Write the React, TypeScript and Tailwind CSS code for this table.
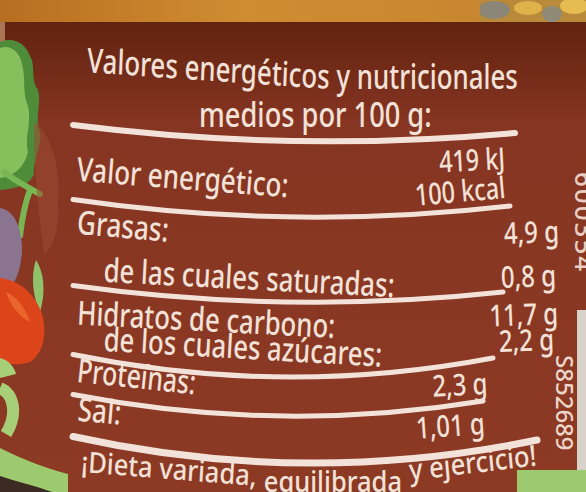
import React from "react";

const RULE = "#f3e2da";

type RuleProps = { to: number; left: number; mid: number; right: number; thick: number };

// curved separator, drawn overflowing its own box the way the jar bends it
function Rule({ to, left, mid, right, thick }: RuleProps) {
  const from = 5;
  const ctrl = 2 * mid - (left + right) / 2;
  return (
    <svg width={449} height={thick} className="block shrink-0 overflow-visible">
      <path
        d={`M${from},${left} Q${(from + to) / 2},${ctrl} ${to},${right}`}
        stroke={RULE}
        strokeWidth={thick}
        strokeLinecap="round"
        fill="none"
      />
    </svg>
  );
}

function LeftStrip() {
  return (
    <svg width={68} height={470} viewBox="0 0 68 470" className="block shrink-0">
      <rect x={0} y={0} width={5} height={50} fill="#c89a74" opacity={0.7} />
      <path d="M0,20 C14,14 26,22 30,34 C36,44 30,56 38,68 C42,82 34,96 40,110 C42,126 32,140 34,152 C30,162 20,166 0,168 Z" fill="#4f8c3a" />
      <path d="M0,26 C10,22 20,30 22,42 C26,56 22,70 28,84 C32,100 24,116 28,130 C24,146 14,154 0,156 Z" fill="#86c05c" />
      <path d="M4,150 C16,160 30,166 40,172 M30,168 C24,184 22,196 20,214" stroke="#78b553" strokeWidth={6} fill="none" strokeLinecap="round" />
      <path d="M34,100 C48,110 62,140 58,180 C60,210 52,226 44,232 C40,200 34,160 34,100 Z" fill="#9a4a33" opacity={0.55} />
      <path d="M0,186 C12,188 20,200 22,224 C22,246 16,260 8,268 L0,270 Z" fill="#8b7490" />
      <path d="M36,238 C44,250 46,270 40,290 C34,278 30,256 36,238 Z" fill="#8fc26b" />
      <path d="M0,256 C18,258 34,270 42,292 C48,314 42,332 30,340 C18,344 8,342 0,340 Z" fill="#dc4519" />
      <path d="M6,270 C16,274 26,286 30,300 C22,296 12,288 6,270 Z" fill="#ee6b32" opacity={0.8} />
      <path d="M0,336 C8,338 14,344 16,352 L0,356 Z" fill="#a6cf78" />
      <path d="M0,366 C14,372 18,392 6,412" stroke="#a6cf78" strokeWidth={12} fill="none" />
      <path d="M0,426 C20,436 44,446 68,452 L68,470 L0,470 Z" fill="#9dca6e" />
      <path d="M0,454 C18,460 36,464 52,470 L0,470 Z" fill="#3b2b22" />
    </svg>
  );
}

export default function App() {
  return (
    <div className="w-[586px] h-[492px] overflow-hidden flex flex-col bg-linear-to-b from-[#62230f] from-5% via-[#863522] via-25% to-[#8c3a24] font-['Noto_Sans','Open_Sans',sans-serif] font-medium text-[#f4e1d7]">
      {/* orange rim of the jar lid */}
      <div className="h-[22px] shrink-0 flex">
        <div className="flex-1 bg-linear-to-r from-[#b86e22] via-[#cf8c30] to-[#c88630]" />
        <svg width={106} height={22} className="block">
          <rect width={106} height={22} fill="#b88a3a" />
          <ellipse cx={14} cy={10} rx={16} ry={9} fill="#8c8676" />
          <ellipse cx={48} cy={8} rx={14} ry={7} fill="#e0b24a" />
          <ellipse cx={72} cy={14} rx={10} ry={8} fill="#8f8a78" />
          <ellipse cx={94} cy={6} rx={14} ry={8} fill="#e6bb52" />
        </svg>
      </div>

      <div className="flex h-[470px]">
        <LeftStrip />

        {/* nutrition table */}
        <div className="w-[449px] shrink-0 flex flex-col">
          <div className="h-[100px] shrink-0 pt-[35px] text-[34px] leading-[38px]">
            <div className="pl-[20px] flex justify-center whitespace-nowrap">
              <span className="block scale-x-[0.76]">
                <span className="inline-block origin-right rotate-[3deg]">Valores energéticos</span> y nutricionales
              </span>
            </div>
            <div className="pl-[46px] flex justify-center whitespace-nowrap">
              <span className="block scale-x-[0.8]">medios por 100 g:</span>
            </div>
          </div>
          <Rule to={447} left={3} mid={19} right={11} thick={6} />

          <div className="h-[69px] shrink-0 flex justify-between">
            <span className="block pl-[12px] pt-[23px] text-[33px] leading-none whitespace-nowrap origin-left rotate-[4.5deg] scale-x-[0.79]">
              Valor energético:
            </span>
            <div className="pr-[12px] pt-[15px] text-[30px] leading-[29px] text-right whitespace-nowrap">
              <div className="origin-right -rotate-[3deg] scale-x-[0.78]">419 kJ</div>
              <div className="origin-right -rotate-[5deg] scale-x-[0.78]">100 kcal</div>
            </div>
          </div>
          <Rule to={442} left={2.5} mid={20} right={9} thick={5} />

          <div className="h-[81px] shrink-0 flex justify-between">
            <div className="pt-[2px] text-[33px] leading-none whitespace-nowrap">
              <div className="pl-[12px] origin-left rotate-[5deg] scale-x-[0.79]">Grasas:</div>
              <div className="pl-[46px] mt-[14px] origin-left rotate-[3deg] scale-x-[0.78]">de las cuales saturadas:</div>
            </div>
            <div className="pt-[14px] text-[30px] leading-none text-right whitespace-nowrap flex flex-col items-end">
              <div className="mr-[17px] origin-right -rotate-[2deg] scale-x-[0.8]">4,9 g</div>
              <div className="mr-[20px] mt-[14px] origin-right -rotate-[2deg] scale-x-[0.8]">0,8 g</div>
            </div>
          </div>
          <Rule to={435} left={2.5} mid={19} right={9} thick={5} />

          <div className="h-[64px] shrink-0 flex justify-between">
            <div className="pt-[11px] text-[33px] leading-[25px] whitespace-nowrap">
              <div className="pl-[12px] origin-left rotate-[3deg] scale-x-[0.78]">Hidratos de carbono:</div>
              <div className="pl-[46px] origin-left rotate-[3.2deg] scale-x-[0.78]">de los cuales azúcares:</div>
            </div>
            <div className="pt-[12px] text-[30px] leading-[26px] whitespace-nowrap flex flex-col items-end">
              <div className="mr-[23px] origin-right -rotate-[2deg] scale-x-[0.8]">11,7 g</div>
              <div className="mr-[27px] origin-right -rotate-[2deg] scale-x-[0.8]">2,2 g</div>
            </div>
          </div>
          <Rule to={425} left={2.5} mid={25} right={6} thick={5} />

          <div className="h-[35px] shrink-0 flex justify-between">
            <span className="block pl-[12px] text-[33px] leading-[24px] whitespace-nowrap origin-left rotate-[6deg] scale-x-[0.75]">
              Proteínas:
            </span>
            <span className="block mr-[30px] pt-[11px] text-[30px] leading-none whitespace-nowrap origin-right -rotate-[3deg] scale-x-[0.8]">
              2,3 g
            </span>
          </div>
          <Rule to={415} left={2.5} mid={24} right={9} thick={5} />

          <div className="h-[36px] shrink-0 flex justify-between">
            <span className="block pl-[12px] text-[33px] leading-[22px] whitespace-nowrap origin-left rotate-[5deg] scale-x-[0.79]">
              Sal:
            </span>
            <span className="block mr-[33px] pt-[11px] text-[30px] leading-none whitespace-nowrap origin-right -rotate-[4deg] scale-x-[0.8]">
              1,01 g
            </span>
          </div>
          <Rule to={469} left={3.5} mid={30} right={7} thick={7} />

          <div className="h-[52px] shrink-0 pl-[15px] pt-[19px] text-[29px] leading-none whitespace-nowrap origin-left scale-x-[0.88]">
            <span className="inline-block -translate-y-[6px] rotate-[4deg]">¡Dieta variada,</span>{" "}
            <span className="inline-block translate-y-[7px]">equilibrada</span>{" "}
            <span className="inline-block -translate-y-[12px] -rotate-[6deg]">y ejercicio!</span>
          </div>
        </div>

        {/* side of the label with the batch codes */}
        <div className="flex-1 flex flex-col">
          <div className="mt-[150px] h-[110px] pl-[55px] text-[26px] leading-none tracking-[2px] text-[#e8cdc2] [writing-mode:vertical-rl] whitespace-nowrap">
            600354
          </div>
          <div className="mt-[28px] h-[160px] flex">
            <div className="w-[60px] pt-[45px] pl-[38px] text-[24px] leading-none text-[#eed6cb] [writing-mode:vertical-rl] whitespace-nowrap">
              S852689
            </div>
            <div className="w-[9px] bg-[#d8d3ca]" />
          </div>
          <div className="flex-1 bg-[#9dca6e]" />
        </div>
      </div>
    </div>
  );
}
